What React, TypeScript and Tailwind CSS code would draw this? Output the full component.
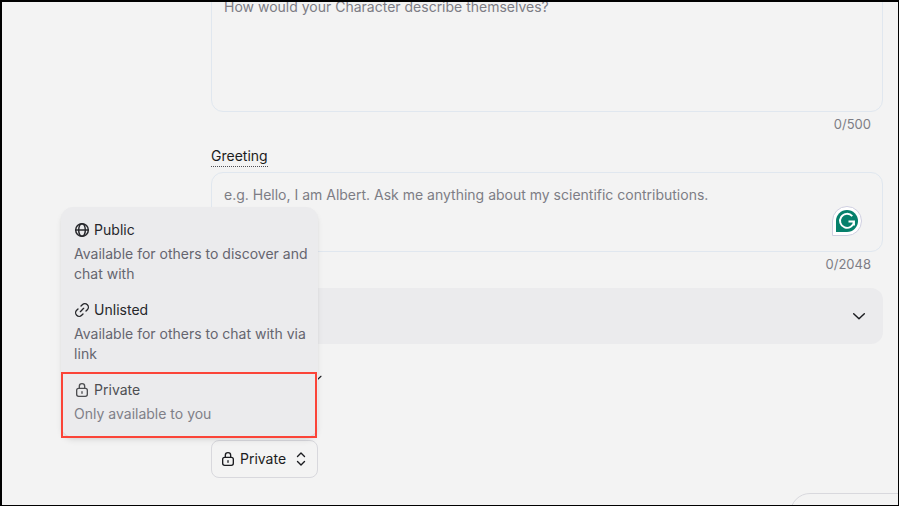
import { useState } from "react";
import type { ReactNode } from "react";

function GlobeIcon() {
  return (
    <svg viewBox="0 0 24 24" className="size-4 shrink-0" fill="none" stroke="currentColor" strokeWidth="2.2" aria-hidden="true">
      <circle cx="12" cy="12" r="9.500" />
      <ellipse cx="12" cy="12" rx="5" ry="9.500" />
      <path d="M2.500 12h19" />
    </svg>
  );
}

function LinkIcon() {
  return (
    <svg viewBox="0 0 24 24" className="size-4 shrink-0" fill="none" stroke="currentColor" strokeWidth="2" strokeLinecap="round" aria-hidden="true">
      <path d="M9.500 14.500l5-5" />
      <path d="M10.500 6l2-2a5.200 5.200 0 0 1 7.500 7.500l-2 2" />
      <path d="M13.500 18l-2 2a5.200 5.200 0 0 1-7.500-7.500l2-2" />
    </svg>
  );
}

function LockIcon() {
  return (
    <svg viewBox="0 0 24 24" className="size-4 shrink-0" fill="none" stroke="currentColor" strokeWidth="2" strokeLinecap="round" aria-hidden="true">
      <rect x="4" y="9.500" width="16" height="12" rx="3" />
      <path d="M8 9.500V6.500a4 4 0 0 1 8 0v3" />
      <path d="M12 14.500v2.500" />
    </svg>
  );
}

function ChevronDown({ className }: { className: string }) {
  return (
    <svg viewBox="0 0 24 24" className={className} fill="none" stroke="currentColor" strokeWidth="2.2" strokeLinecap="round" strokeLinejoin="round" aria-hidden="true">
      <path d="M4 8.500l8 7.500 8-7.500" />
    </svg>
  );
}

function SelectorIcon() {
  return (
    <svg viewBox="0 0 16 16" className="size-4 shrink-0" fill="none" stroke="currentColor" strokeWidth="1.4" strokeLinecap="round" strokeLinejoin="round" aria-hidden="true">
      <path d="M4.500 5.500L8 2l3.500 3.500M4.500 10.500L8 14l3.500-3.500" />
    </svg>
  );
}

function AssistantBadge() {
  return (
    <svg viewBox="0 0 30 30" className="size-[30px]" aria-hidden="true">
      <path d="M.5 29.500V15A14.500 14.500 0 1 1 15 29.500Z" fill="#fff" stroke="#cfcfe0" />
      <path d="M4 26V15A11 11 0 1 1 15 26Z" fill="#06806b" />
      <path d="M20.300 10.200A7 7 0 1 0 22 15.500h-5.500M22 15.500v4" fill="none" stroke="#fff" strokeWidth="1.900" />
    </svg>
  );
}

const fieldClass =
  "block w-full resize-none rounded-xl border border-[#e0e7ef] bg-transparent px-3 py-3 text-sm text-[#26272b] outline-none placeholder:text-[#7d7d85]";

function Counter({ children }: { children: ReactNode }) {
  return <p className="px-3 pt-1 text-right text-[13px] leading-4 text-[#7d7d85]">{children}</p>;
}

type Option = { name: string; text: string; icon: ReactNode };

const options: Option[] = [
  { name: "Public", text: "Available for others to discover and chat with", icon: <GlobeIcon /> },
  { name: "Unlisted", text: "Available for others to chat with via link", icon: <LinkIcon /> },
  { name: "Private", text: "Only available to you", icon: <LockIcon /> },
];

export default function App() {
  const [selected, setSelected] = useState("Private");
  const current = options.find((o) => o.name === selected) ?? options[2];

  return (
    <main className="relative h-screen overflow-hidden border-t-2 border-r border-b border-l-2 border-black bg-[#f3f3f3] font-['Inter',sans-serif] text-[#1b1c20]">
      <form className="-mt-[18px] mr-[15px] ml-[209px]">
        <textarea
          aria-label="Description"
          placeholder="How would your Character describe themselves?"
          className={`${fieldClass} h-32`}
        />
        <Counter>0/500</Counter>

        <label htmlFor="greeting" className="mt-[14px] inline-block border-b border-dotted border-[#4c4d52] text-sm leading-5">
          Greeting
        </label>
        <div className="relative mt-[5px]">
          <textarea
            id="greeting"
            placeholder="e.g. Hello, I am Albert. Ask me anything about my scientific contributions."
            className={`${fieldClass} h-20`}
          />
          <button type="button" aria-label="Writing assistant" className="absolute right-[21px] bottom-4">
            <AssistantBadge />
          </button>
        </div>
        <Counter>0/2048</Counter>

        <button type="button" aria-label="Advanced" className="mt-4 flex h-14 w-full items-center justify-end rounded-xl bg-[#ebebed] px-4">
          <ChevronDown className="size-4" />
        </button>

        <button type="button" aria-label="More options" className="mt-7 flex h-3 w-28 items-center justify-end">
          <ChevronDown className="size-3" />
        </button>

        <div className="relative mt-14 w-fit">
          <button type="button" aria-haspopup="listbox" aria-expanded="true" className="flex h-[38px] items-center rounded-lg border border-[#d8d8dd] px-2 text-sm">
            {current.icon}
            <span className="mr-[7px] ml-1">{current.name}</span>
            <SelectorIcon />
          </button>
          <div role="listbox" aria-label="Visibility" className="absolute right-0 bottom-full mb-[3px] w-[257px] rounded-xl border border-[#ebebed] bg-[#ebebed] p-1 shadow-md">
            {options.map((o) => (
              <button
                key={o.name}
                type="button"
                role="option"
                aria-selected={o.name === selected}
                onClick={() => setSelected(o.name)}
                className={`block w-full py-2 pl-2 text-left text-sm ${o.name === selected ? "opacity-80" : ""}`}
              >
                <span className="flex items-center gap-1 text-[#26272b]">
                  {o.icon}
                  {o.name}
                </span>
                <span className="mt-1 block text-[#65656f]">{o.text}</span>
              </button>
            ))}
            <div className="pointer-events-none absolute -bottom-0.5 -left-px h-[66px] w-64 border-2 border-[#fb4438]" />
          </div>
        </div>
      </form>
      <div className="absolute right-0 bottom-0 h-3 w-[108px] overflow-hidden">
        <button type="button" aria-label="Create" className="block h-10 w-40 rounded-full border border-[#d8d8dd]" />
      </div>
    </main>
  );
}
